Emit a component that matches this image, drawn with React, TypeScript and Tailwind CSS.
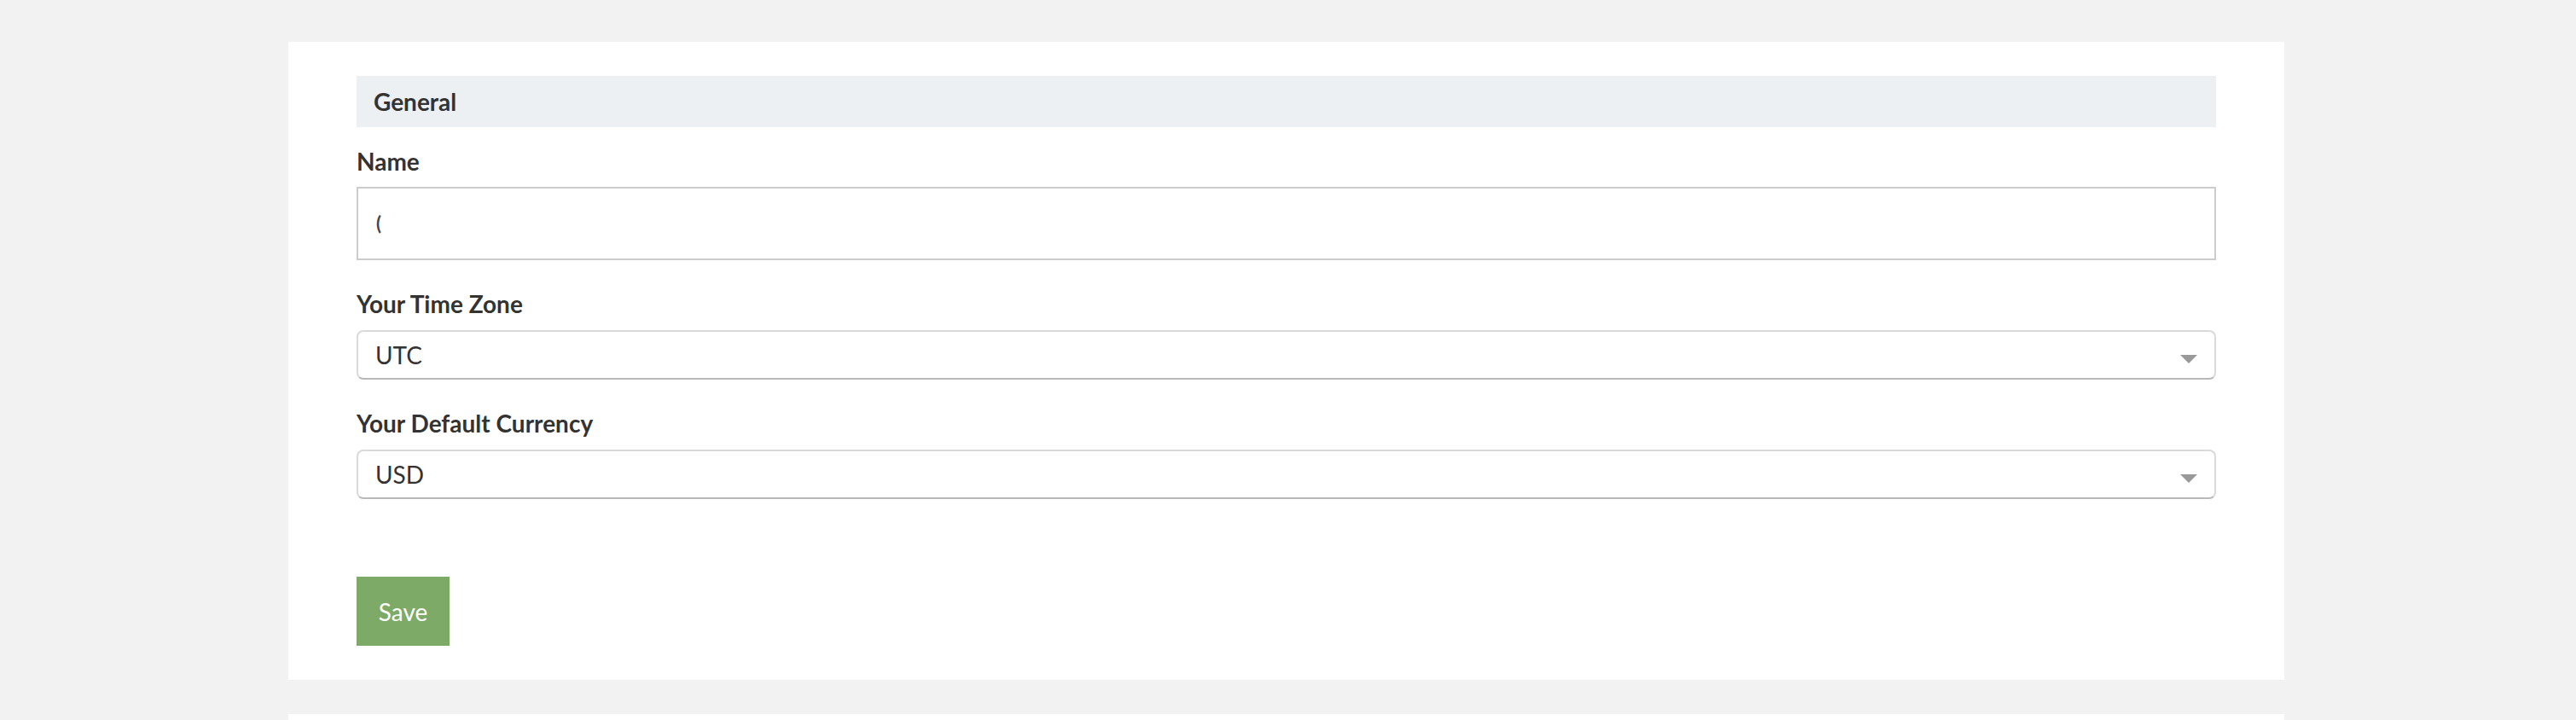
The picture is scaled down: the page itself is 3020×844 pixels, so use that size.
import React from "react";

function Label({ children, className = "" }: { children: React.ReactNode; className?: string }) {
  return (
    <div className={`text-[28px] leading-[34px] font-bold text-[#333333] ${className}`}>{children}</div>
  );
}

function SelectBox({ value }: { value: string }) {
  return (
    <div className="mt-[14px] h-[58px] rounded-[8px] border-2 border-[#dadada] border-b-[#b9b9b9] bg-white flex items-center pl-[20px] pr-[20px] justify-between">
      <span className="text-[28px] leading-[34px] text-[#333333]">{value}</span>
      <svg width="20" height="10" viewBox="0 0 20 10" className="mt-[10px]">
        <polygon points="0,0 20,0 10,10" fill="#999999" />
      </svg>
    </div>
  );
}

export default function App() {
  return (
    <div className="h-screen overflow-hidden bg-[#f2f2f2] pt-[49px] font-['Lato',_'Noto_Sans',_sans-serif]">
      <div className="ml-[338px] w-[2340px] bg-white px-[80px] pt-[40px] pb-[40px]">
        <div className="h-[60px] bg-[#ecf0f2] flex items-center pl-[20px]">
          <span className="text-[28px] leading-[34px] font-bold text-[#333333]">General</span>
        </div>

        <Label className="mt-[23px]">Name</Label>
        <div className="mt-[13px] h-[86px] border-2 border-[#cccccc] bg-white flex items-center pl-[21px]">
          <span className="text-[22px] leading-[24px] font-bold text-[#444444]">(</span>
        </div>

        <Label className="mt-[34px]">Your Time Zone</Label>
        <SelectBox value="UTC" />

        <Label className="mt-[34px]">Your Default Currency</Label>
        <SelectBox value="USD" />

        <button className="mt-[91px] w-[109px] h-[81px] bg-[#7eaa67] text-white text-[28px] leading-[34px] flex items-center justify-center">
          Save
        </button>
      </div>
      <div className="ml-[338px] mt-[40px] w-[2340px] h-[200px] bg-white" />
    </div>
  );
}
